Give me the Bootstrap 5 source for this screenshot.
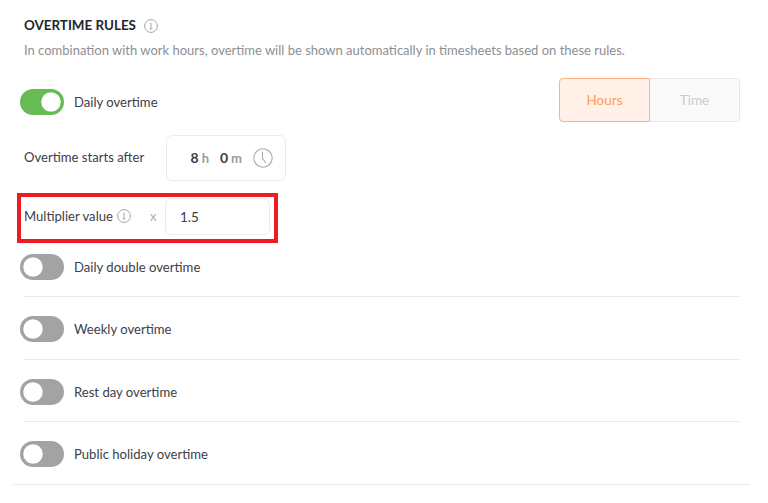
<!DOCTYPE html>
<html lang="en">
<head>
    <title>Overtime Rules</title>
    <link rel="stylesheet" href="https://cdn.jsdelivr.net/npm/bootstrap@5.3.0/dist/css/bootstrap.min.css">
    <style>
        body { font-family: "Lato", "Open Sans", sans-serif; font-size: 13.1px; color: #3c4048; background: #fff; overflow: hidden; }
        .page-wrap { padding: 17px 28px 0 24px; width: 768px; height: 503px; }
        .rules-title { font-size: 13.4px; font-weight: 700; color: #23262b; margin: 0; line-height: 17px; }
        .rules-desc { font-size: 13px; color: #8d8f92; margin: 7px 0 0; line-height: 18px; }
        .info-ic { color: #a4a6a8; flex: none; }
        .form-switch.sw-row { padding: 0; margin: 0 0 0 -4px; min-height: 0; display: flex; align-items: center; gap: 10px; }
        .form-switch .sw-input { width: 44px; height: 26px; margin: 0; float: none; flex: none; border: 0; background-color: #a3a3a3; box-shadow: none;
            background-image: url("data:image/svg+xml,%3csvg xmlns='http://www.w3.org/2000/svg' viewBox='-4 -4 8 8'%3e%3ccircle r='3' fill='%23fff'/%3e%3c/svg%3e"); }
        .form-switch .sw-input:checked { background-color: #66bb55; }
        .sw-text { margin: 0; line-height: 18px; }
        .first-row { margin-top: 19px; height: 44px; }
        .first-row .sw-row { margin-top: 4px; }
        .unit-switch { width: 181px; height: 44px; }
        .unit-btn { flex: 1; display: flex; align-items: center; justify-content: center; font-size: 13.5px; }
        .unit-on { background: #fff1e8; border: 1px solid #ffb083; color: #ff9b63; border-radius: 4px 0 0 4px; }
        .unit-off { background: #fafafa; border: 1px solid #e8e8e8; border-left: 0; color: #c9c9c9; border-radius: 0 4px 4px 0; }
        .start-row { margin-top: 13px; }
        .field-label { width: 142px; }
        .time-box { width: 120px; height: 46px; border: 1px solid #ececec; border-radius: 6px; padding-right: 12px; gap: 11px; font-size: 14px; }
        .time-box b { font-weight: 700; color: #3c4048; }
        .time-box span span { color: #9a9c9f; font-weight: 700; margin-left: 3px; font-size: 13px; }
        .highlight-box { margin: 12px 0 0 -7px; width: 261px; height: 50px; border: 4px solid #ed1c24; padding: 0 0 3px 3px; }
        .mult-label { width: 126px; gap: 4px; }
        .mult-x { width: 15px; color: #a9abad; font-size: 13px; }
        .mult-input { width: 105px; height: 37px; flex: none; border: 1px solid #ececec; border-radius: 6px; padding: 0 14px; font-size: 13.5px; color: #3c4048; }
        .mult-input:focus { box-shadow: none; border-color: #ececec; }
        .rule-row { height: 62.6px; padding-top: 3px; border-bottom: 1px solid #e9e9e9; display: flex; align-items: center; }
        .rule-first { height: 54px; padding: 0 0 6px; }
        .rule-last { margin-left: -11px; width: 737px; padding-left: 11px; }
    </style>
</head>
<body>
    <div class="page-wrap">
        <div class="d-flex align-items-center gap-2">
            <h2 class="rules-title">OVERTIME RULES</h2>
            <svg class="info-ic" width="14" height="14" viewBox="0 0 14 14" fill="none" stroke="currentColor"><circle cx="7" cy="7" r="6.4"/><path d="M6 4.2h1v5.6M5.6 9.9h2.8"/></svg>
        </div>
        <p class="rules-desc">In combination with work hours, overtime will be shown automatically in timesheets based on these rules.</p>

        <div class="first-row d-flex align-items-center justify-content-between">
            <div class="form-check form-switch sw-row">
                <input class="form-check-input sw-input" type="checkbox" id="swDaily" checked>
                <label class="sw-text" for="swDaily">Daily overtime</label>
            </div>
            <div class="unit-switch d-flex">
                <div class="unit-btn unit-on">Hours</div>
                <div class="unit-btn unit-off">Time</div>
            </div>
        </div>

        <div class="start-row d-flex align-items-center">
            <div class="field-label">Overtime starts after</div>
            <div class="time-box d-flex align-items-center justify-content-end">
                <span><b>8</b><span>h</span></span>
                <span><b>0</b><span>m</span></span>
                <svg width="20" height="20" viewBox="0 0 20 20" fill="none" stroke="#a9abad" stroke-width="1.1"><circle cx="10" cy="10" r="9.2"/><path d="M9.5 3.5V10.5L13 15"/></svg>
            </div>
        </div>

        <div class="highlight-box d-flex align-items-center">
            <div class="mult-label d-flex align-items-center">
                <span>Multiplier value</span>
                <svg class="info-ic" width="14" height="14" viewBox="0 0 14 14" fill="none" stroke="currentColor"><circle cx="7" cy="7" r="6.4"/><path d="M6 4.2h1v5.6M5.6 9.9h2.8"/></svg>
            </div>
            <div class="mult-x">x</div>
            <input class="form-control mult-input" type="text" value="1.5">
        </div>

        <div class="rule-row rule-first">
            <div class="form-check form-switch sw-row">
                <input class="form-check-input sw-input" type="checkbox" id="swDouble">
                <label class="sw-text" for="swDouble">Daily double overtime</label>
            </div>
        </div>
        <div class="rule-row">
            <div class="form-check form-switch sw-row">
                <input class="form-check-input sw-input" type="checkbox" id="swWeekly">
                <label class="sw-text" for="swWeekly">Weekly overtime</label>
            </div>
        </div>
        <div class="rule-row">
            <div class="form-check form-switch sw-row">
                <input class="form-check-input sw-input" type="checkbox" id="swRest">
                <label class="sw-text" for="swRest">Rest day overtime</label>
            </div>
        </div>
        <div class="rule-row rule-last">
            <div class="form-check form-switch sw-row">
                <input class="form-check-input sw-input" type="checkbox" id="swHoliday">
                <label class="sw-text" for="swHoliday">Public holiday overtime</label>
            </div>
        </div>
    </div>
    <script src="https://cdn.jsdelivr.net/npm/bootstrap@5.3.0/dist/js/bootstrap.bundle.min.js"></script>
</body>
</html>
